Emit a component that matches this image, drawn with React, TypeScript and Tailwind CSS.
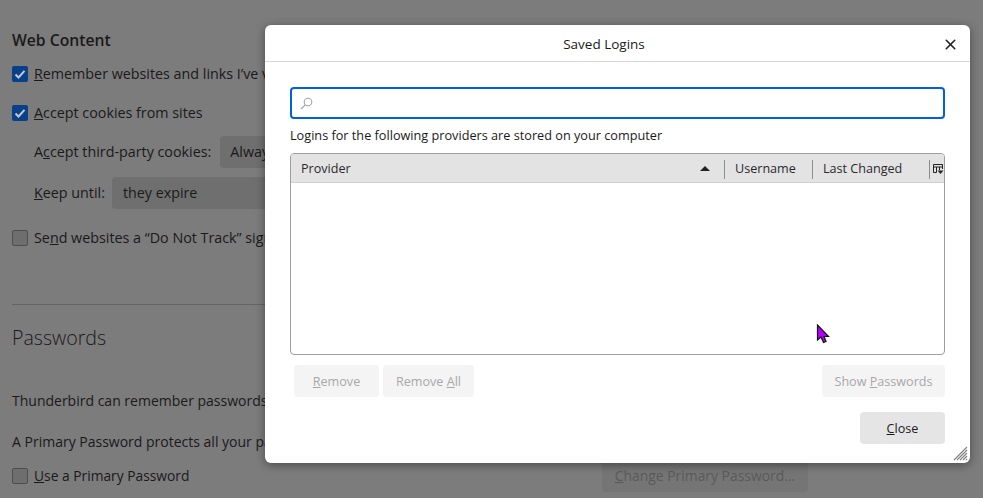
import { ReactNode } from "react"
import { X } from "lucide-react"

function Check({ on }: { on?: boolean }) {
  if (!on) return <span className="w-4 h-4 shrink-0 rounded-[2px] border border-[#4e4e4e] bg-[#6e6e6e]" />
  return (
    <span className="w-4 h-4 shrink-0 rounded-[2px] bg-[#08408a] flex items-center justify-center">
      <svg width="12" height="12" viewBox="0 0 12 12" fill="none">
        <path d="M1.5 6.5L4.5 9.5L10.5 2.8" stroke="#c4c9d0" strokeWidth="2" />
      </svg>
    </span>
  )
}

function DlgButton({ children, disabled, className }: { children: ReactNode; disabled?: boolean; className: string }) {
  return (
    <button
      className={
        "h-8 pt-[2px] rounded-[4px] text-[12.6px] flex items-center justify-center " +
        (disabled ? "bg-[#f4f4f4] text-[#a8a8a8] " : "bg-[#e5e5e5] text-[#1c1c1c] ") +
        className
      }
    >
      {children}
    </button>
  )
}

export default function App() {
  return (
    <div className="relative w-[983px] h-[498px] overflow-hidden bg-[#7c7c7c] text-[#1a1a1a] text-[14.3px] font-['Open_Sans','Noto_Sans',sans-serif]">
      {/* Settings page behind the dialog */}
      <div className="flex flex-col pl-3 pt-[28px]">
        <h2 className="h-6 leading-6 text-[15.7px] font-semibold">Web Content</h2>
        <div className="flex items-center gap-[6px] h-5 mt-[12px] whitespace-nowrap">
          <Check on />
          <span><u>R</u>emember websites and links I’ve visited</span>
        </div>
        <div className="flex items-center gap-[6px] h-5 mt-[19px]">
          <Check on />
          <span><u>A</u>ccept cookies from sites</span>
        </div>
        <div className="flex items-center gap-[9px] h-8 mt-[13px] pl-[22px] whitespace-nowrap">
          <span>A<u>c</u>cept third-party cookies:</span>
          <div className="h-8 px-[10px] flex items-center rounded-[4px] bg-[#6f6f6f]">Always</div>
        </div>
        <div className="flex items-center gap-[7px] h-8 mt-[9px] pl-[22px]">
          <span><u>K</u>eep until:</span>
          <div className="h-8 w-[200px] px-[11px] flex items-center rounded-[4px] bg-[#6f6f6f]">they expire</div>
        </div>
        <div className="flex items-center gap-[6px] h-5 mt-[19px] whitespace-nowrap">
          <Check />
          <span>Se<u>n</u>d websites a “Do Not Track” signal</span>
        </div>
        <div className="mt-[56px] w-[400px] border-t border-[#646464]" />
        <h2 className="mt-[17px] h-8 leading-8 text-[19.6px] font-light">Passwords</h2>
        <p className="mt-[37px] h-5 leading-5 text-[14px] whitespace-nowrap">Thunderbird can remember passwords</p>
        <p className="mt-[21px] h-5 leading-5 text-[14px] whitespace-nowrap">A Primary Password protects all your passwords</p>
        <div className="flex items-center gap-[6px] h-5 mt-[14px] text-[13.8px] whitespace-nowrap">
          <Check />
          <span><u>U</u>se a Primary Password</span>
        </div>
      </div>

      <div className="absolute left-[602px] top-[460px] w-[206px] h-8 rounded-[4px] bg-[#757575] text-[13.9px] text-[#5a5a5a] flex items-center justify-center whitespace-nowrap">
        <span><u>C</u>hange Primary Password...</span>
      </div>

      {/* Saved Logins dialog */}
      <div className="absolute left-[265px] top-[25px] w-[705px] h-[438px] bg-white rounded-[6px] shadow-[0_2px_10px_rgba(0,0,0,0.4)] flex flex-col text-[#1a1a1a]">
        <div className="relative h-[37px] shrink-0 border-b border-[#d8d8d8] flex items-center justify-center pr-[27px] pt-[3px]">
          <span className="text-[13.5px] font-medium">Saved Logins</span>
          <X size={17} strokeWidth={2.2} className="absolute right-[11px] top-[11px] text-[#1f1f24]" />
        </div>

        <div className="flex flex-col flex-1 px-[25px] pt-[25px]">
          <div className="h-8 rounded-[4px] border-2 border-[#0060df] flex items-center pl-[8px]">
            <svg width="13" height="13" viewBox="0 0 13 13" fill="none" stroke="#a3a3a3" strokeWidth="1.1">
              <circle cx="8" cy="5" r="3.8" />
              <path d="M5.2 7.8L1 12" />
            </svg>
          </div>
          <p className="mt-[6px] h-[20px] leading-5 text-[12.7px] whitespace-nowrap">Logins for the following providers are stored on your computer</p>

          <div className="mt-[8px] h-[202px] rounded-[4px] border border-[#9e9e9e] overflow-hidden">
            <div className="h-[29px] pt-[2px] bg-[#e3e3e3] border-b border-[#cfcfcf] flex items-center text-[12.6px] text-[#2a2a2e]">
              <div className="flex-1 pl-[10px] pr-[14px] flex items-center justify-between">
                <span>Provider</span>
                <svg width="10" height="5" viewBox="0 0 10 5"><path d="M5 0L10 5H0z" fill="#222" /></svg>
              </div>
              <div className="w-[88px] h-[19px] border-l border-[#8c8c8c] pl-[10px] flex items-center">Username</div>
              <div className="w-[117px] h-[19px] border-l border-[#8c8c8c] pl-[10px] flex items-center whitespace-nowrap">Last Changed</div>
              <div className="w-[15px] h-[19px] border-l border-[#8c8c8c] pl-[3px] flex items-center">
                <svg width="11" height="11" viewBox="0 0 11 11" fill="none">
                  <path d="M0.5 7.5V0.5H9.5V5M0.5 3H9.5M3.5 3V8.5H0.5V7M6.5 3V6" stroke="#222" />
                  <path d="M4.5 6.5H10.5L7.5 10z" fill="#222" />
                </svg>
              </div>
            </div>
          </div>

          <div className="mt-[10px] flex items-center pl-1 gap-1">
            <DlgButton disabled className="w-[85px]"><span><u>R</u>emove</span></DlgButton>
            <DlgButton disabled className="w-[91px]"><span>Remove <u>A</u>ll</span></DlgButton>
            <DlgButton disabled className="w-[123px] ml-auto"><span>Show <u>P</u>asswords</span></DlgButton>
          </div>

          <div className="mt-[15px] flex justify-end">
            <DlgButton className="w-[85px]"><span><u>C</u>lose</span></DlgButton>
          </div>
        </div>

        {/* resize grip */}
        <svg className="absolute right-[2px] bottom-[2px]" width="15" height="15" viewBox="0 0 15 15" stroke="#7f7f7f" strokeWidth="1.1">
          <path d="M1 14L14 1M4 14L14 4M7 14L14 7M10 14L14 10M13 14L14 13" />
        </svg>
      </div>

      {/* mouse pointer */}
      <svg className="absolute left-[816px] top-[324px]" width="14" height="20" viewBox="0 0 14 20">
        <path d="M1.5 1V16L5 13L7.5 18.5L10 17.5L8 12.5H12.5z" fill="#b400ff" stroke="#111" strokeWidth="1.2" />
      </svg>
    </div>
  )
}
